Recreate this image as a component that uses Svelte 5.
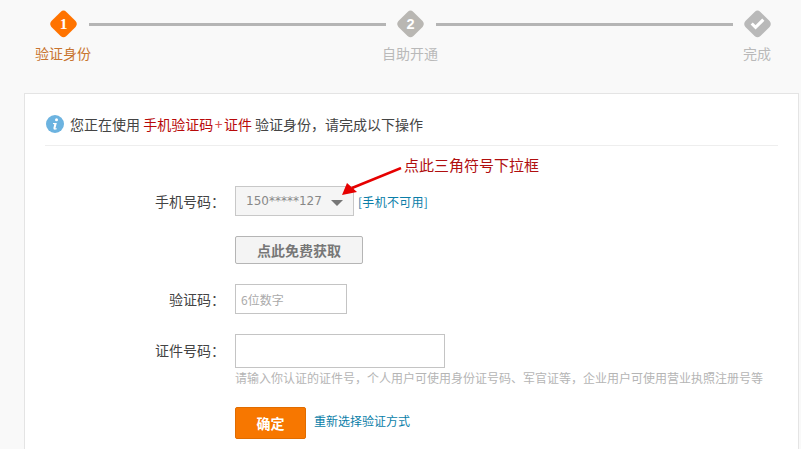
<script>
	const steps = [
		{ label: '验证身份', active: true },
		{ label: '自助开通', active: false },
		{ label: '完成', active: false }
	];
</script>

<div class="page">
	<div class="track">
		<svg class="diamond" viewBox="0 0 30 30">
			<path d="M15 1 Q16.5 1 18 2.5 L27.5 12 Q30 15 27.5 18 L18 27.5 Q15 30 12 27.5 L2.500 18 Q0 15 2.500 12 L12 2.500 Q13.500 1 15 1 Z" fill="#ff7300" />
			<text x="15" y="20" class="num serif">1</text>
		</svg>
		<span class="line"></span>
		<svg class="diamond" viewBox="0 0 30 30">
			<path d="M15 1 Q16.5 1 18 2.5 L27.5 12 Q30 15 27.5 18 L18 27.5 Q15 30 12 27.5 L2.500 18 Q0 15 2.500 12 L12 2.500 Q13.500 1 15 1 Z" fill="#b9b7b3" />
			<text x="15" y="20" class="num">2</text>
		</svg>
		<span class="line"></span>
		<svg class="diamond" viewBox="0 0 30 30">
			<path d="M15 1 Q16.5 1 18 2.5 L27.5 12 Q30 15 27.5 18 L18 27.5 Q15 30 12 27.5 L2.500 18 Q0 15 2.500 12 L12 2.500 Q13.500 1 15 1 Z" fill="#b9b9b9" />
			<path d="M9 14.500 L13 18.500 L21 10.500" fill="none" stroke="#fff" stroke-width="3.200" />
		</svg>
	</div>
	<div class="labels">
		{#each steps as step}
			<span class="label" class:active={step.active}>{step.label}</span>
		{/each}
	</div>

	<div class="card">
		<div class="notice">
			<svg class="info" viewBox="0 0 18 18">
				<circle cx="9" cy="9" r="9" fill="#6cb3e0" />
				<circle cx="10.500" cy="4.700" r="1.500" fill="#fff" />
				<path d="M7 8 H10.800 L9.500 13 Q9.400 13.800 11 13.200 L10.800 14.300 Q7 15.400 7.400 13 L8.300 9.200 L7 9 Z" fill="#fff" />
			</svg>
			<span>您正在使用 <em>手机验证码<b>+</b>证件</em> 验证身份，请完成以下操作</span>
		</div>

		<div class="tip">
			<span>点此三角符号下拉框</span>
			<svg class="arrow" viewBox="0 0 70 40">
				<path d="M62 1 L13 21" stroke="#e60000" stroke-width="2.500" fill="none" />
				<path d="M3 28 L8 16 L18 25 Z" fill="#e60000" />
			</svg>
		</div>

		<div class="form">
			<div class="row">
				<span class="name">手机号码：</span>
				<div class="select">
					<span>150*****127</span>
					<i class="caret"></i>
				</div>
				<a class="link unavailable" href="#top">[手机不可用]</a>
			</div>
			<div class="row">
				<span class="name"></span>
				<button class="get">点此免费获取</button>
			</div>
			<div class="row">
				<span class="name">验证码：</span>
				<input class="code" placeholder="6位数字" />
			</div>
			<div class="row id-row">
				<span class="name">证件号码：</span>
				<input class="id" />
			</div>
			<div class="row">
				<span class="name"></span>
				<p class="hint">请输入你认证的证件号，个人用户可使用身份证号码、军官证等，企业用户可使用营业执照注册号等</p>
			</div>
			<div class="row actions">
				<span class="name"></span>
				<button class="ok">确定</button>
				<a class="link again" href="#top">重新选择验证方式</a>
			</div>
		</div>
	</div>
</div>

<style>
	:global(body) {
		margin: 0;
		background: #f9f9f9;
		overflow: hidden;
	}

	.page {
		height: 449px;
		overflow: hidden;
		font-family: "Noto Sans CJK SC", "Liberation Sans", sans-serif;
		font-size: 14px;
		color: #444;
	}

	.track {
		display: flex;
		align-items: center;
		padding: 9px 0 0 49px;
	}

	.diamond {
		width: 29px;
		height: 30px;
		flex: none;
	}

	.num {
		font-family: "Liberation Sans", sans-serif;
		font-size: 15px;
		font-weight: bold;
		fill: #fff;
		text-anchor: middle;
	}

	.serif {
		font-family: "Liberation Serif", serif;
		font-size: 16px;
	}

	.line {
		width: 297px;
		height: 3px;
		margin: 0 10px 0 11px;
		background: #b5b5b5;
	}

	.labels {
		display: flex;
		gap: 291px;
		padding: 4px 0 0 35px;
		height: 26px;
		line-height: 20px;
	}

	.label {
		width: 56px;
		text-align: center;
		color: #b9b9b9;
	}

	.label:first-child {
		color: #c8742f;
	}

	.card {
		position: relative;
		box-sizing: border-box;
		width: 775px;
		height: 400px;
		margin: 24px 0 0 24px;
		padding: 0 20px;
		background: #fff;
		border: 1px solid #e4e4e4;
	}

	.notice {
		box-sizing: border-box;
		display: flex;
		align-items: center;
		gap: 6px;
		height: 52px;
		padding: 8px 0 0 1px;
		border-bottom: 1px solid #eee;
		line-height: 20px;
	}

	.info {
		width: 18px;
		height: 18px;
		flex: none;
	}

	em {
		font-style: normal;
		color: #b80a0a;
	}

	em b {
		padding: 0 1.500px;
		font-weight: normal;
		color: #d9534f;
	}

	.tip {
		position: absolute;
		left: 314px;
		top: 61px;
		color: #b00f0f;
		line-height: 20px;
		font-size: 15px;
		white-space: nowrap;
	}

	.tip span {
		margin-left: 65px;
	}

	.arrow {
		position: absolute;
		left: 0;
		top: 12px;
		width: 70px;
		height: 40px;
	}

	.form {
		padding-top: 40px;
	}

	.row {
		display: flex;
		align-items: center;
		margin-bottom: 20px;
	}

	.name {
		flex: none;
		width: 180px;
		margin-right: 10px;
		text-align: right;
		line-height: 20px;
	}

	.select {
		box-sizing: border-box;
		display: flex;
		align-items: center;
		width: 119px;
		height: 30px;
		padding-left: 10px;
		background: #f5f5f5;
		border: 1px solid #c8c8c8;
		font-family: "DejaVu Sans", sans-serif;
		font-size: 12px;
		color: #888;
	}

	.caret {
		width: 0;
		height: 0;
		margin: 4px 0 0 9px;
		border: 6px solid transparent;
		border-top: 6px solid #777;
		border-bottom: 0;
	}

	.link {
		font-size: 12px;
		color: #0a7ea8;
		text-decoration: none;
	}

	.unavailable {
		margin-left: 4px;
		letter-spacing: 0.3px;
	}

	button {
		font-family: inherit;
		padding: 0;
	}

	.get {
		box-sizing: border-box;
		width: 128px;
		height: 28px;
		background: #f4f4f4;
		border: 1px solid #b5b5b5;
		border-radius: 2px;
		font-size: 14px;
		font-weight: bold;
		color: #777;
	}

	input {
		box-sizing: border-box;
		padding: 0 5px;
		background: #fff;
		border: 1px solid #c4c4c4;
		font-family: inherit;
		font-size: 12px;
	}

	input::placeholder {
		color: #aaa;
		opacity: 1;
	}

	.code {
		width: 112px;
		height: 30px;
	}

	.id {
		width: 210px;
		height: 34px;
	}

	.id-row {
		margin-bottom: 0;
	}

	.id-row .name {
		margin-bottom: 2px;
	}

	.hint {
		margin: 1px 0 0;
		height: 18px;
		line-height: 18px;
		font-size: 12px;
		white-space: nowrap;
		color: #b5b5b5;
	}

	.actions {
		gap: 8px;
	}

	.actions .name {
		margin-right: 2px;
	}

	.ok {
		box-sizing: border-box;
		width: 71px;
		height: 32px;
		background: #f77700;
		border: 1px solid #e06c00;
		border-radius: 2px;
		font-size: 14px;
		font-weight: bold;
		color: #fff;
	}

	.again {
		margin-bottom: 6px;
	}
</style>
